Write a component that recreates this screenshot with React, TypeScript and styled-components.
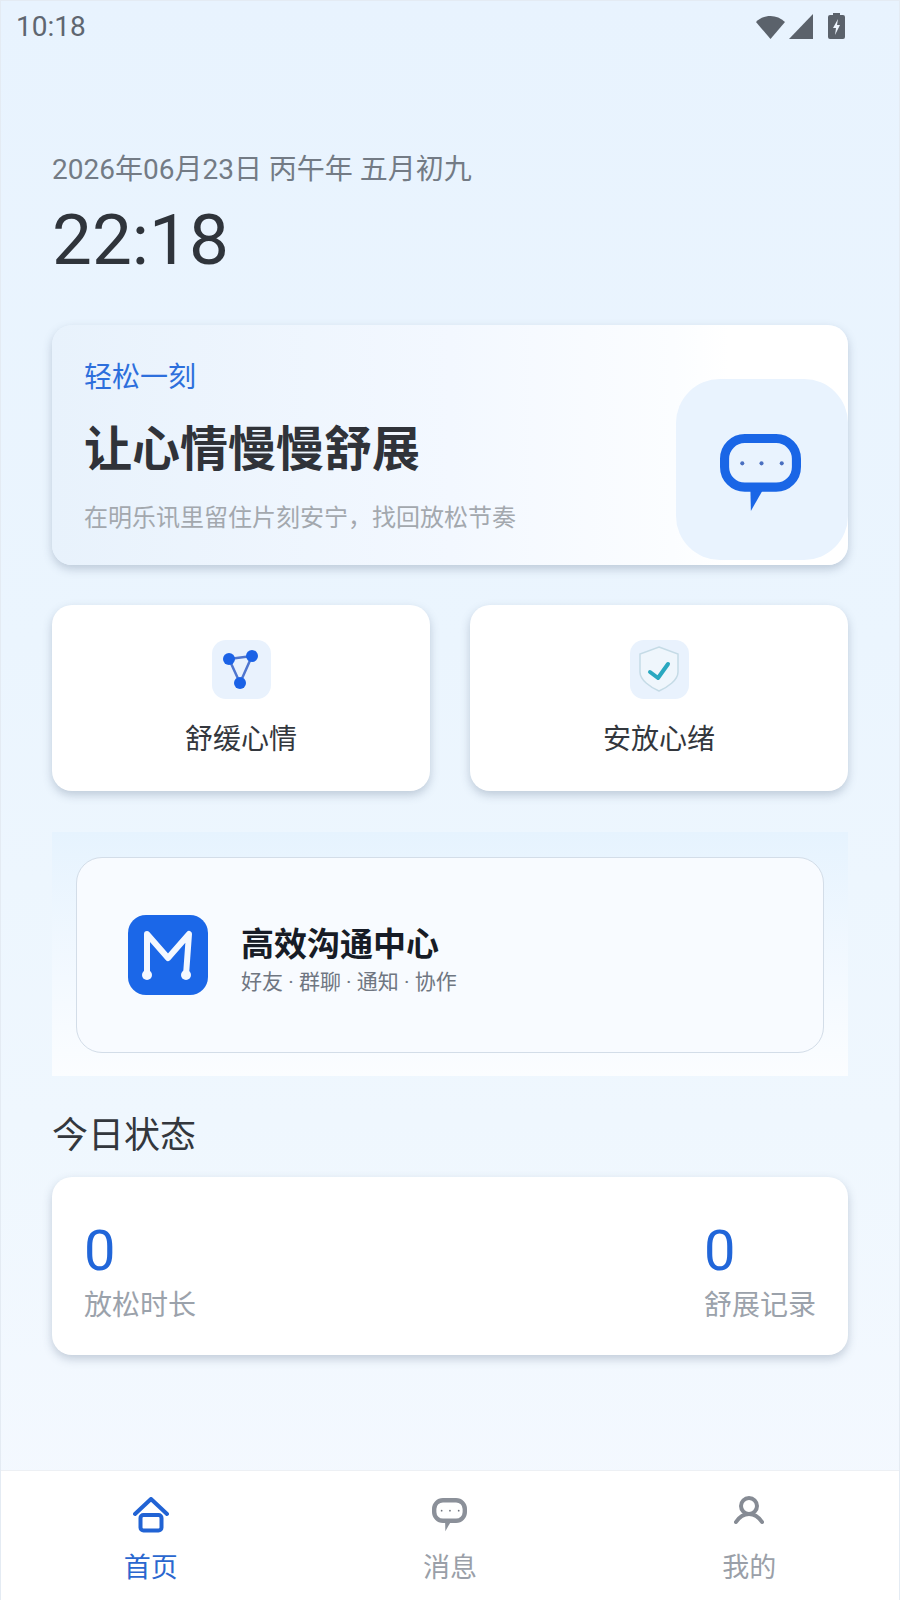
import React from 'react'
import styled, { createGlobalStyle } from 'styled-components'

const GlobalStyle = createGlobalStyle`
  html, body { margin: 0; padding: 0; }
  body {
    font-family: Roboto, "Noto Sans CJK SC", sans-serif;
    background: #fff;
  }
  * { box-sizing: border-box; }
`

const Screen = styled.div`
  width: 900px;
  height: 1600px;
  display: flex;
  flex-direction: column;
  background: linear-gradient(180deg, #e8f3fe 0%, #ebf5fe 40%, #eff7fe 70%, #f5f9ff 100%);
  border: 1px solid #e4ebf3;
  border-bottom: none;
  overflow: hidden;
`

const StatusBar = styled.div`
  height: 50px;
  padding: 0 54px 0 15px;
  display: flex;
  align-items: center;
  justify-content: space-between;
`

const Clock = styled.span`
  font-size: 28px;
  color: #5f6670;
`

const StatusIcons = styled.div`
  display: flex;
  align-items: center;
  gap: 4px;
`

const BatteryIcon = styled.svg`
  margin-left: 11px;
`

const Main = styled.div`
  flex: 1;
  padding: 102px 51px 0;
  display: flex;
  flex-direction: column;
`

const DateLine = styled.div`
  font-size: 28px;
  line-height: 34px;
  color: #737b85;
`

const BigTime = styled.div`
  font-size: 71px;
  line-height: 84px;
  margin-top: 11px;
  color: #2f343b;
`

const Hero = styled.div`
  margin-top: 43px;
  height: 240px;
  border-radius: 20px;
  position: relative;
  overflow: hidden;
  padding: 34px 32px 0;
  background: linear-gradient(90deg, #e8f2fc 0%, #f3f8ff 50%, #fbfdff 78%, #ffffff 85%);
  box-shadow: 0 4px 10px rgba(70, 90, 120, 0.28);
`

const HeroTag = styled.div`
  font-size: 28px;
  line-height: 38px;
  color: #2d6fdc;
`

const HeroTitle = styled.div`
  margin-top: 25px;
  font-size: 48px;
  line-height: 56px;
  font-weight: 700;
  color: #303339;
`

const HeroNote = styled.div`
  margin-top: 24px;
  font-size: 24px;
  line-height: 32px;
  color: #a3a8ae;
`

const HeroBadge = styled.div`
  position: absolute;
  top: 54px;
  right: 0;
  width: 172px;
  height: 181px;
  border-radius: 44px;
  background: #e9f3fe;
  display: flex;
  align-items: center;
  justify-content: center;
  padding: 6px 4px 0 0;
`

const QuickRow = styled.div`
  margin-top: 40px;
  display: grid;
  grid-template-columns: 1fr 1fr;
  gap: 40px;
`

const QuickCard = styled.div`
  height: 186px;
  border-radius: 20px;
  background: #fff;
  box-shadow: 0 4px 10px rgba(70, 90, 120, 0.28);
  display: flex;
  flex-direction: column;
  align-items: center;
  padding-top: 35px;
`

const QuickIcon = styled.div`
  width: 59px;
  height: 59px;
  border-radius: 14px;
  background: #e9f2fd;
  display: flex;
  align-items: center;
  justify-content: center;
`

const QuickLabel = styled.div`
  margin-top: 22px;
  font-size: 28px;
  line-height: 38px;
  color: #33373d;
`

const BannerBand = styled.div`
  margin-top: 41px;
  height: 244px;
  padding: 25px 24px 22px;
  background: linear-gradient(180deg, #e6f3fe 0%, #f3f9ff 60%, #fbfdff 100%);
`

const BannerCard = styled.div`
  height: 196px;
  border-radius: 26px;
  border: 1px solid #d3dde8;
  background: #f8fbff;
  display: flex;
  align-items: center;
  padding-left: 51px;
  gap: 33px;
`

const LogoTile = styled.div`
  width: 80px;
  height: 80px;
  border-radius: 18px;
  background: #1b67e8;
`

const BannerText = styled.div`
  display: flex;
  flex-direction: column;
  padding-top: 10px;
`

const BannerTitle = styled.div`
  font-size: 33px;
  line-height: 42px;
  font-weight: 700;
  color: #171c26;
`

const BannerSub = styled.div`
  margin-top: 2px;
  font-size: 21px;
  line-height: 28px;
  color: #6f7681;
`

const SectionTitle = styled.div`
  margin-top: 37px;
  font-size: 36px;
  line-height: 46px;
  color: #33373d;
`

const StatsCard = styled.div`
  margin-top: 18px;
  height: 178px;
  border-radius: 20px;
  background: #fff;
  box-shadow: 0 4px 10px rgba(70, 90, 120, 0.28);
  padding: 10px 32px 0;
  display: flex;
  align-items: center;
  justify-content: space-between;
`

const Stat = styled.div`
  display: flex;
  flex-direction: column;
`

const StatValue = styled.div`
  font-size: 56px;
  line-height: 66px;
  color: #2166d9;
`

const StatLabel = styled.div`
  margin-top: 3px;
  font-size: 28px;
  line-height: 38px;
  color: #9ba2ab;
`

const BottomNav = styled.div`
  height: 130px;
  background: #fff;
  border-top: 1px solid #edf0f4;
  display: grid;
  grid-template-columns: repeat(3, 1fr);
`

const NavItem = styled.div`
  display: flex;
  flex-direction: column;
  align-items: center;
  padding-top: 21px;
`

const NavIcon = styled.div`
  height: 46px;
  display: flex;
  align-items: center;
  justify-content: center;
`

const NavLabel = styled.div<{ $active?: boolean }>`
  margin-top: 12px;
  font-size: 27px;
  line-height: 36px;
  color: ${props => (props.$active ? '#2a67cf' : '#9a9fa8')};
`

const BubbleIcon = ({ size, color, stroke, dot }: { size: number; color: string; stroke: number; dot: string }) => (
  <svg width={size} height={size * 0.95} viewBox="0 0 80 76" fill="none">
    <path d="M30 54 L30.5 76 L43 54 Z" fill={color} />
    <rect x={stroke / 2} y={stroke / 2} width={80 - stroke} height={57 - stroke} rx="20" stroke={color} strokeWidth={stroke} />
    <circle cx="22" cy="29" r="2" fill={dot} />
    <circle cx="41" cy="29" r="2" fill={dot} />
    <circle cx="61" cy="29" r="2" fill={dot} />
  </svg>
)

export default function App() {
  return (
    <Screen>
      <GlobalStyle />
      <StatusBar>
        <Clock>10:18</Clock>
        <StatusIcons>
          <svg width="29" height="25" viewBox="0 0 29 25">
            <path d="M0 8 C8 0 21 0 29 8 L14.5 25 Z" fill="#5b626b" />
          </svg>
          <svg width="24" height="25" viewBox="0 0 24 25">
            <path d="M24 0 V25 H0 Z" fill="#5b626b" />
          </svg>
          <BatteryIcon width="17" height="26" viewBox="0 0 17 26">
            <path d="M5 0 H12 V2 H15 Q17 2 17 4 V24 Q17 26 15 26 H2 Q0 26 0 24 V4 Q0 2 2 2 H5 Z" fill="#5b626b" />
            <path d="M10 6 L5 15 H8 L7 22 L12 12 H9 Z" fill="#eef5fe" />
          </BatteryIcon>
        </StatusIcons>
      </StatusBar>
      <Main>
        <DateLine>2026年06月23日 丙午年 五月初九</DateLine>
        <BigTime>22:18</BigTime>
        <Hero>
          <HeroTag>轻松一刻</HeroTag>
          <HeroTitle>让心情慢慢舒展</HeroTitle>
          <HeroNote>在明乐讯里留住片刻安宁，找回放松节奏</HeroNote>
          <HeroBadge>
            <BubbleIcon size={81} color="#1a66e6" stroke={9} dot="#4a6fc0" />
          </HeroBadge>
        </Hero>
        <QuickRow>
          <QuickCard>
            <QuickIcon>
              <svg width="59" height="59" viewBox="0 0 59 59" fill="none">
                <path d="M17 19 L40 16 L28 43 Z" stroke="#4f76cf" strokeWidth="2.5" />
                <circle cx="17" cy="19" r="6" fill="#1b62e6" />
                <circle cx="40" cy="16" r="6" fill="#1b62e6" />
                <circle cx="28" cy="43" r="6" fill="#1b62e6" />
              </svg>
            </QuickIcon>
            <QuickLabel>舒缓心情</QuickLabel>
          </QuickCard>
          <QuickCard>
            <QuickIcon>
              <svg width="59" height="59" viewBox="0 0 59 59" fill="none">
                <path d="M29 7 L48 14 V32 C48 40 38 47 29 51 C20 47 10 40 10 32 V14 Z" fill="#eff6fc" stroke="#c5dbe6" strokeWidth="1.5" />
                <path d="M20 32 L28 38 L38 24" stroke="#2aa8c0" strokeWidth="4" strokeLinecap="round" strokeLinejoin="round" />
              </svg>
            </QuickIcon>
            <QuickLabel>安放心绪</QuickLabel>
          </QuickCard>
        </QuickRow>
        <BannerBand>
          <BannerCard>
            <LogoTile>
              <svg width="80" height="80" viewBox="0 0 80 80" fill="none">
                <path d="M19 60 V19 L40 43 L61 19 L58 60" stroke="#f4f8ff" strokeWidth="6" strokeLinecap="round" strokeLinejoin="round" />
                <circle cx="19" cy="60" r="5" fill="#f4f8ff" />
                <circle cx="58" cy="60" r="5" fill="#f4f8ff" />
              </svg>
            </LogoTile>
            <BannerText>
              <BannerTitle>高效沟通中心</BannerTitle>
              <BannerSub>好友 · 群聊 · 通知 · 协作</BannerSub>
            </BannerText>
          </BannerCard>
        </BannerBand>
        <SectionTitle>今日状态</SectionTitle>
        <StatsCard>
          <Stat>
            <StatValue>0</StatValue>
            <StatLabel>放松时长</StatLabel>
          </Stat>
          <Stat>
            <StatValue>0</StatValue>
            <StatLabel>舒展记录</StatLabel>
          </Stat>
        </StatsCard>
      </Main>
      <BottomNav>
        <NavItem>
          <NavIcon>
            <svg width="36" height="36" viewBox="0 0 36 36" fill="none">
              <path d="M2 17 L18 2 L34 17" stroke="#2163d4" strokeWidth="4" strokeLinecap="round" strokeLinejoin="round" />
              <rect x="7.5" y="18" width="21" height="15.5" rx="3" stroke="#2163d4" strokeWidth="4" />
            </svg>
          </NavIcon>
          <NavLabel $active>首页</NavLabel>
        </NavItem>
        <NavItem>
          <NavIcon>
            <BubbleIcon size={35} color="#8b9099" stroke={10} dot="#6e737c" />
          </NavIcon>
          <NavLabel>消息</NavLabel>
        </NavItem>
        <NavItem>
          <NavIcon>
            <svg width="30" height="38" viewBox="0 0 30 38" fill="none">
              <circle cx="15" cy="10" r="8" stroke="#868b94" strokeWidth="4" />
              <path d="M2 26 C6 20 10 18 15 18 C20 18 24 20 28 26" stroke="#868b94" strokeWidth="4" strokeLinecap="round" />
            </svg>
          </NavIcon>
          <NavLabel>我的</NavLabel>
        </NavItem>
      </BottomNav>
    </Screen>
  )
}
